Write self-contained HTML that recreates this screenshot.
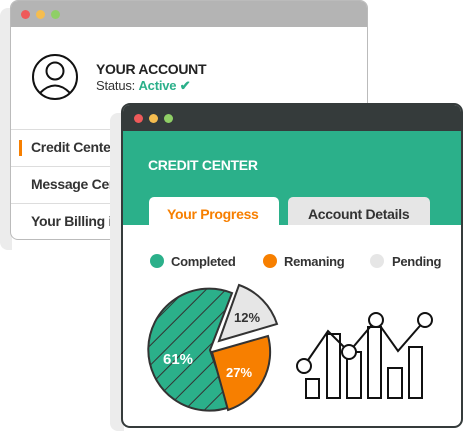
<!DOCTYPE html>
<html><head><style>
body{margin:0;width:463px;height:438px;background:#fff;position:relative;overflow:hidden;font-family:"Liberation Sans",sans-serif}
.abs{position:absolute}
.dot{position:absolute;width:9px;height:9px;border-radius:50%}
.t{position:absolute;font-weight:bold;white-space:nowrap;letter-spacing:-0.3px}
</style></head><body>
<div class="abs" style="left:0;top:8px;width:12px;height:242px;background:#ececec;border-radius:8px 0 0 8px"></div>
<div class="abs" style="left:10px;top:0;width:358px;height:240px;border:1px solid #bbb;border-radius:8px;background:#fff;overflow:hidden;box-sizing:border-box">
 <div class="abs" style="left:0;top:0;width:100%;height:26px;background:#b4b4b4"></div>
 <div class="dot" style="left:10px;top:9px;background:#ee5a5a"></div>
 <div class="dot" style="left:25px;top:9px;background:#f5bd4f"></div>
 <div class="dot" style="left:40px;top:9px;background:#8fcf66"></div>
 <div class="abs" style="left:0;top:128px;width:100%;height:1px;background:#ddd"></div>
 <div class="abs" style="left:0;top:165px;width:100%;height:1px;background:#ddd"></div>
 <div class="abs" style="left:0;top:202px;width:100%;height:1px;background:#ddd"></div>
 <div class="abs" style="left:8px;top:139px;width:3px;height:16px;background:#f77f00"></div>
</div>
<svg class="abs" style="left:31px;top:53px" width="48" height="48"><circle cx="24" cy="24" r="22" fill="none" stroke="#111" stroke-width="2"/><circle cx="24" cy="18" r="8.5" fill="none" stroke="#111" stroke-width="2"/><path d="M9 40 Q24 25 39 40" fill="none" stroke="#111" stroke-width="2"/></svg>
<div class="t" style="left:96px;top:61px;font-size:14px;color:#222">YOUR ACCOUNT</div>
<div class="abs" style="left:96px;top:78px;font-size:13px;color:#333;letter-spacing:-0.2px">Status: <b style="color:#2bb08a">Active ✔</b></div>
<div class="t" style="left:31px;top:139px;font-size:14px;color:#333">Credit Center</div>
<div class="t" style="left:31px;top:176px;font-size:14px;color:#333">Message Center</div>
<div class="t" style="left:31px;top:213px;font-size:14px;color:#333">Your Billing info</div>

<div class="abs" style="left:110px;top:113px;width:14px;height:318px;background:#ececec;border-radius:8px 0 0 8px"></div>
<div class="abs" style="left:121px;top:103px;width:342px;height:325px;border:2px solid #353b3b;border-radius:9px;background:#fff;overflow:hidden;box-sizing:border-box">
 <div class="abs" style="left:0;top:0;width:100%;height:26px;background:#353b3b"></div>
 <div class="dot" style="left:11px;top:9px;background:#ee5a5a"></div>
 <div class="dot" style="left:26px;top:9px;background:#f5bd4f"></div>
 <div class="dot" style="left:41px;top:9px;background:#8fcf66"></div>
 <div class="abs" style="left:0;top:26px;width:100%;height:94px;background:#2bb08a"></div>
 <div class="t" style="left:25px;top:52px;font-size:14px;color:#fff">CREDIT CENTER</div>
 <div class="abs" style="left:26px;top:92px;width:130px;height:30px;background:#fff;border-radius:5px 5px 0 0"></div>
 <div class="t" style="left:44px;top:101px;font-size:14px;color:#f77f00">Your Progress</div>
 <div class="abs" style="left:165px;top:92px;width:142px;height:28px;background:#e6e6e6;border-radius:5px 5px 0 0"></div>
 <div class="t" style="left:185px;top:101px;font-size:14px;color:#333">Account Details</div>
 <div class="dot" style="left:27px;top:149px;width:14px;height:14px;background:#2bb08a"></div>
 <div class="t" style="left:48px;top:149px;font-size:13px;color:#333">Completed</div>
 <div class="dot" style="left:140px;top:149px;width:14px;height:14px;background:#f77f00"></div>
 <div class="t" style="left:161px;top:149px;font-size:13px;color:#333">Remaning</div>
 <div class="dot" style="left:247px;top:149px;width:14px;height:14px;background:#e6e6e6"></div>
 <div class="t" style="left:269px;top:149px;font-size:13px;color:#333">Pending</div>
</div>
<svg class="abs" style="left:0;top:0" width="463" height="438">
 <defs><pattern id="h" width="14" height="14" patternUnits="userSpaceOnUse" patternTransform="rotate(45)"><rect width="14" height="14" fill="#2bb08a"/><line x1="0" y1="0" x2="0" y2="14" stroke="#333" stroke-width="2"/></pattern></defs>
 <path d="M210 350 L230 407 A61 61 0 1 1 232 293 Z" fill="url(#h)" stroke="#333" stroke-width="2"/>
 <path d="M212 352 L268 336 A61 61 0 0 1 228 410 Z" fill="#f77f00" stroke="#333" stroke-width="2"/>
 <path d="M219 341 L239 285 A61 61 0 0 1 277 324 Z" fill="#e6e6e6" stroke="#333" stroke-width="2"/>
 <text x="163" y="364" font-family="Liberation Sans" font-weight="bold" font-size="15" fill="#fff">61%</text>
 <text x="226" y="377" font-family="Liberation Sans" font-weight="bold" font-size="13" fill="#fff">27%</text>
 <text x="234" y="322" font-family="Liberation Sans" font-weight="bold" font-size="13" fill="#333">12%</text>
 <g fill="#fff" stroke="#111" stroke-width="2">
  <rect x="306" y="379" width="13" height="19"/><rect x="327" y="334" width="13" height="64"/><rect x="347" y="352" width="14" height="46"/><rect x="368" y="327" width="13" height="71"/><rect x="388" y="368" width="14" height="30"/><rect x="409" y="347" width="13" height="51"/>
  <polyline points="304,366 328,331 349,352 376,320 398,351 425,320" fill="none"/>
  <circle cx="304" cy="366" r="7"/><circle cx="349" cy="352" r="7"/><circle cx="376" cy="320" r="7"/><circle cx="425" cy="320" r="7"/>
 </g>
</svg>
</body></html>
